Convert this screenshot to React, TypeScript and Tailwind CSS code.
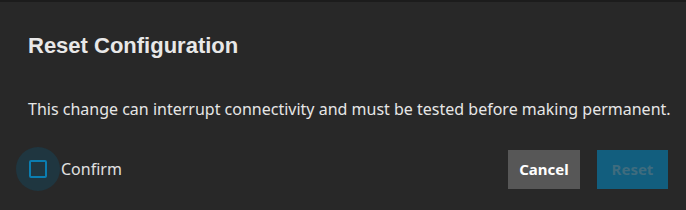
export default function App() {
  return (
    <div className="h-[210px] w-[686px] overflow-hidden border-t-2 border-[#1c1c1c] bg-[#282828] text-[#e6e6e6]">
      <h1 className="pl-[28px] pt-[31px] font-['Liberation_Sans',Arial,sans-serif] text-[22px] font-bold leading-[26px] text-[#e8e8e8]">
        Reset Configuration
      </h1>
      <p className="mt-[40px] whitespace-nowrap pl-[28px] font-['Noto_Sans',sans-serif] text-[16px] leading-[20px]">
        This change can interrupt connectivity and must be tested before making permanent.
      </p>
      <div className="mt-[28px] flex items-center justify-between pl-[16px] pr-[18px]">
        <label className="flex items-center">
          <span className="flex h-[44px] w-[44px] items-center justify-center rounded-full bg-[#1f3640]">
            <span className="h-[18px] w-[18px] rounded-[2px] border-2 border-[#0b7db0]" />
          </span>
          <span className="ml-[1px] font-['Noto_Sans',sans-serif] text-[16px] text-[#e0e0e0]">Confirm</span>
        </label>
        <div className="flex gap-[17px] font-['Noto_Sans',sans-serif] text-[15px] font-bold">
          <button className="h-[39px] w-[72px] bg-[#575757] text-white">Cancel</button>
          <button className="h-[39px] w-[71px] bg-[#125e7e] text-[#3f6c7e]">Reset</button>
        </div>
      </div>
    </div>
  );
}
